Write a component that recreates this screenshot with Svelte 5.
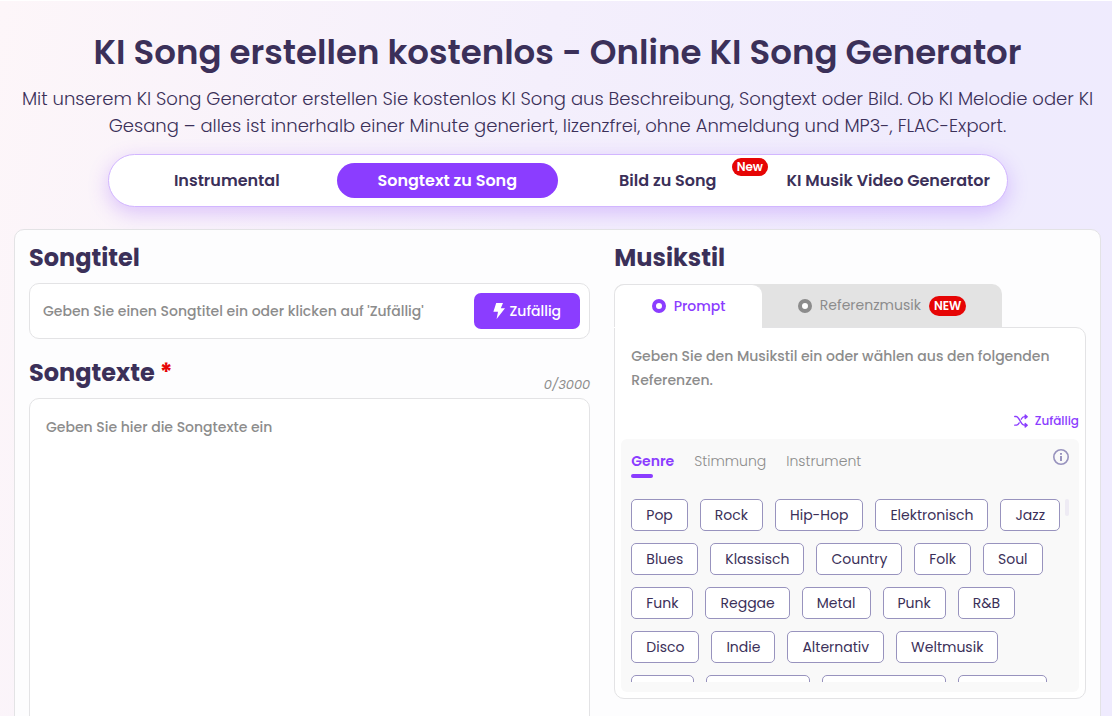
<script lang="ts">
    const modes = [
        { label: "Instrumental" },
        { label: "Songtext zu Song" },
        { label: "Bild zu Song", badge: "New" },
        { label: "KI Musik Video Generator" },
    ];

    const categories = ["Genre", "Stimmung", "Instrument"];

    const genres = [
        ["Pop", "Rock", "Hip-Hop", "Elektronisch", "Jazz"],
        ["Blues", "Klassisch", "Country", "Folk", "Soul"],
        ["Funk", "Reggae", "Metal", "Punk", "R&B"],
        ["Disco", "Indie", "Alternativ", "Weltmusik"],
        ["Latin", "Elektropop", "Kirchenmusik", "Ambient"],
    ];

    let mode = $state("Songtext zu Song");
    let category = $state("Genre");
    let source = $state("prompt");
    let title = $state("");
    let lyrics = $state("");
    let style = $state("");

    function addGenre(genre: string) {
        style = style ? `${style}, ${genre}` : genre;
    }

    function pick() {
        const all = genres.flat();
        style = all[Math.floor(Math.random() * all.length)];
    }
</script>

<main class="page">
    <header>
        <h1>KI Song erstellen kostenlos - Online KI Song Generator</h1>
        <p>
            Mit unserem KI Song Generator erstellen Sie kostenlos KI Song aus Beschreibung, Songtext oder Bild. Ob KI Melodie oder KI
            Gesang – alles ist innerhalb einer Minute generiert, lizenzfrei, ohne Anmeldung und MP3-, FLAC-Export.
        </p>
    </header>

    <nav class="modes">
        {#each modes as item}
            <button class="mode" class:active={mode === item.label} onclick={() => (mode = item.label)}>
                {item.label}
                {#if item.badge}<span class="badge corner">{item.badge}</span>{/if}
            </button>
        {/each}
    </nav>

    <div class="card">
        <section class="column">
            <h2><label for="title">Songtitel</label></h2>
            <div class="title-box">
                <input
                    id="title"
                    type="text"
                    bind:value={title}
                    placeholder="Geben Sie einen Songtitel ein oder klicken auf 'Zufällig'"
                />
                <button class="btn-random" onclick={() => (title = "Sommerregen")}>
                    <svg width="12" height="16" viewBox="0 0 12 16" aria-hidden="true">
                        <path d="M3.2 0H10L7.8 5.2H12L3.6 16L5 8.8H0.4Z" fill="#fff" />
                    </svg>
                    Zufällig
                </button>
            </div>

            <div class="lyrics-head">
                <h2><label for="lyrics">Songtexte <span class="required">*</span></label></h2>
                <span class="count">{lyrics.length}/3000</span>
            </div>
            <textarea id="lyrics" class="lyrics" maxlength="3000" bind:value={lyrics} placeholder="Geben Sie hier die Songtexte ein"
            ></textarea>
        </section>

        <section class="column">
            <h2><label for="style">Musikstil</label></h2>
            <div class="sources">
                <button class="source" class:active={source === "prompt"} onclick={() => (source = "prompt")}>
                    <span class="dot"></span>Prompt
                </button>
                <button class="source wide" class:active={source === "reference"} onclick={() => (source = "reference")}>
                    <span class="dot"></span>Referenzmusik<span class="badge">NEW</span>
                </button>
            </div>

            <div class="panel">
                <textarea
                    id="style"
                    class="style"
                    bind:value={style}
                    placeholder="Geben Sie den Musikstil ein oder wählen aus den folgenden Referenzen."
                ></textarea>

                <button class="shuffle" onclick={pick}>
                    <svg width="14" height="14" viewBox="0 0 14 14" fill="none" stroke="currentColor" stroke-width="1.3" stroke-linecap="round" stroke-linejoin="round" aria-hidden="true">
                        <path d="M0.7 2.5H2C5.8 2.5 6.2 11.2 10.5 11.2H12.6" />
                        <path d="M0.7 11.2H2.2C3.6 11.2 4.5 10.2 5.2 8.9" />
                        <path d="M7.2 5.2C8 3.6 8.9 2.7 10.5 2.7H12.6" />
                        <path d="M11.2 0.9L13.2 2.7L11.2 4.5Z" fill="currentColor" />
                        <path d="M11.2 9.4L13.2 11.2L11.2 13Z" fill="currentColor" />
                    </svg>
                    Zufällig
                </button>

                <div class="tags">
                    <div class="categories">
                        {#each categories as name}
                            <button class="category" class:active={category === name} onclick={() => (category = name)}>{name}</button>
                        {/each}
                        <button class="info" aria-label="Info">
                            <svg width="16" height="16" viewBox="0 0 16 16" aria-hidden="true">
                                <circle cx="8" cy="8" r="7.2" fill="none" stroke="#9893be" stroke-width="1.6" />
                                <path d="M8 7V12M8 4V5.7" stroke="#9893be" stroke-width="2" />
                            </svg>
                        </button>
                    </div>

                    <div class="scroller">
                        <div class="chips">
                            {#each genres as row}
                                <div class="chip-row">
                                    {#each row as genre}
                                        <button class="chip" onclick={() => addGenre(genre)}>{genre}</button>
                                    {/each}
                                </div>
                            {/each}
                        </div>
                        <span class="thumb"></span>
                    </div>
                </div>
            </div>
        </section>
    </div>
</main>

<style>
    :global(body) {
        margin: 0;
    }

    .page {
        --primary: #8b3dff;
        --ink: #3b3059;
        --muted: #8c8c8c;
        --line: #e3e3e5;
        box-sizing: border-box;
        height: 100vh;
        overflow: hidden;
        padding: 0 11px 0 14px;
        border-top: 1px solid #fff;
        background: linear-gradient(100deg, #fdf6f9 0%, #f4effc 45%, #efebfd 80%, #efebfe 100%);
        color: var(--ink);
        font-family: Poppins, Inter, "Open Sans", sans-serif;
    }

    .page * {
        box-sizing: border-box;
    }

    button,
    input,
    textarea {
        font: inherit;
        color: inherit;
        margin: 0;
        padding: 0;
        border: 0;
        background: none;
    }

    button {
        cursor: pointer;
    }

    header {
        text-align: center;
    }

    h1 {
        margin: 0;
        padding-top: 24px;
        font-size: 34px;
        line-height: 54px;
        font-weight: 600;
    }

    header p {
        margin: 6px 0 0;
        font-size: 18px;
        line-height: 27px;
        font-weight: 300;
    }

    .modes {
        display: grid;
        grid-template-columns: repeat(4, 1fr);
        max-width: 900px;
        margin: 15px auto 0;
        padding: 8px;
        border: 1px solid #d2b6ff;
        border-radius: 27px;
        background: #fff;
        box-shadow: 0 6px 20px rgba(139, 61, 255, 0.27);
    }

    .mode {
        position: relative;
        height: 35px;
        border-radius: 18px;
        font-size: 16px;
        font-weight: 600;
        white-space: nowrap;
    }

    .mode.active {
        background: var(--primary);
        color: #fff;
    }

    .badge {
        padding: 0 5px;
        border-radius: 10px;
        background: #e60505;
        color: #fff;
        font-size: 12px;
        line-height: 20px;
        font-weight: 600;
    }

    .corner {
        position: absolute;
        top: -5px;
        right: 10px;
        font-size: 12px;
        line-height: 18px;
    }

    .card {
        display: grid;
        grid-template-columns: 1.19fr 1fr;
        gap: 24px;
        margin-top: 22px;
        padding: 10px 14px 14px;
        border: 1px solid var(--line);
        border-radius: 10px;
        background: #fdfdfe;
    }

    .column {
        min-width: 0;
    }

    h2 {
        margin: 0;
        font-size: 24px;
        line-height: 36px;
        font-weight: 700;
    }

    .title-box {
        display: flex;
        align-items: center;
        height: 56px;
        margin: 7px 0 16px;
        padding: 0 9px 0 13px;
        border: 1px solid var(--line);
        border-radius: 10px;
        background: #fff;
    }

    input {
        flex: 1;
        min-width: 0;
        font-size: 14px;
        font-weight: 500;
        outline: none;
    }

    ::placeholder {
        color: var(--muted);
        opacity: 1;
    }

    .btn-random {
        display: flex;
        align-items: center;
        justify-content: center;
        gap: 4px;
        width: 106px;
        height: 36px;
        border-radius: 7px;
        background: var(--primary);
        color: #fff;
        font-size: 14px;
        font-weight: 500;
    }

    .lyrics-head {
        display: flex;
        justify-content: space-between;
        align-items: flex-end;
    }

    .required {
        color: #e60505;
    }

    .count {
        color: var(--muted);
        font-size: 13px;
        line-height: 12px;
        font-style: italic;
        font-weight: 400;
    }

    .lyrics {
        display: block;
        width: 100%;
        height: 400px;
        margin-top: 7px;
        padding: 16px;
        border: 1px solid var(--line);
        border-radius: 10px;
        background: #fff;
        font-size: 14px;
        line-height: 24px;
        font-weight: 500;
        resize: none;
        outline: none;
    }

    .sources {
        display: flex;
        width: 388px;
        max-width: 100%;
        height: 43px;
        margin-top: 8px;
        border-radius: 10px 10px 0 0;
        background: #e3e3e3;
    }

    .source {
        display: flex;
        flex: 147;
        align-items: center;
        justify-content: center;
        gap: 8px;
        color: var(--muted);
        font-size: 14px;
        font-weight: 400;
    }

    .source.wide {
        flex: 241;
    }

    .source.active {
        border: 1px solid var(--line);
        border-width: 1px 0 0 1px;
        border-radius: 10px 10px 0 0;
        background: #fff;
        color: var(--primary);
        font-weight: 500;
        /* covers the panel's top edge under the open tab */
        box-shadow: 0 1px 0 #fff;
        z-index: 1;
    }

    .dot {
        width: 14px;
        height: 14px;
        border: 4px solid currentColor;
        border-radius: 50%;
        background: #fff;
    }

    .panel {
        display: flex;
        flex-direction: column;
        padding: 16px 6px 6px;
        border: 1px solid var(--line);
        border-radius: 0 10px 10px 10px;
        background: #fff;
    }

    .style {
        height: 64px;
        padding: 0 10px;
        font-size: 14px;
        line-height: 24px;
        font-weight: 500;
        resize: none;
        outline: none;
    }

    .shuffle {
        display: flex;
        align-items: center;
        align-self: flex-end;
        gap: 7px;
        height: 26px;
        margin-bottom: 5px;
        color: var(--primary);
        font-size: 12px;
        font-weight: 500;
    }

    .tags {
        padding: 10px;
        border-radius: 6px;
        background: #f9f9f9;
    }

    .categories {
        display: flex;
        gap: 20px;
        height: 50px;
    }

    .category {
        position: relative;
        height: 24px;
        color: var(--muted);
        font-size: 14px;
        font-weight: 300;
    }

    .category.active {
        color: var(--primary);
        font-weight: 600;
    }

    .category.active::after {
        content: "";
        position: absolute;
        left: 0;
        bottom: -5px;
        width: 22px;
        height: 4px;
        border-radius: 2px;
        background: var(--primary);
    }

    .info {
        height: 16px;
        margin-left: auto;
    }

    .info svg {
        display: block;
    }

    .scroller {
        display: flex;
        justify-content: space-between;
        height: 183px;
        overflow: hidden;
    }

    .chip-row {
        display: flex;
        gap: 12px;
        margin-bottom: 12px;
    }

    .chip {
        height: 32px;
        padding: 0 14px;
        border: 1px solid #9893be;
        border-radius: 5px;
        background: #fff;
        font-size: 14px;
        font-weight: 400;
        white-space: nowrap;
    }

    .thumb {
        width: 4px;
        height: 17px;
        border-radius: 2px;
        background: #eeebf4;
    }
</style>
